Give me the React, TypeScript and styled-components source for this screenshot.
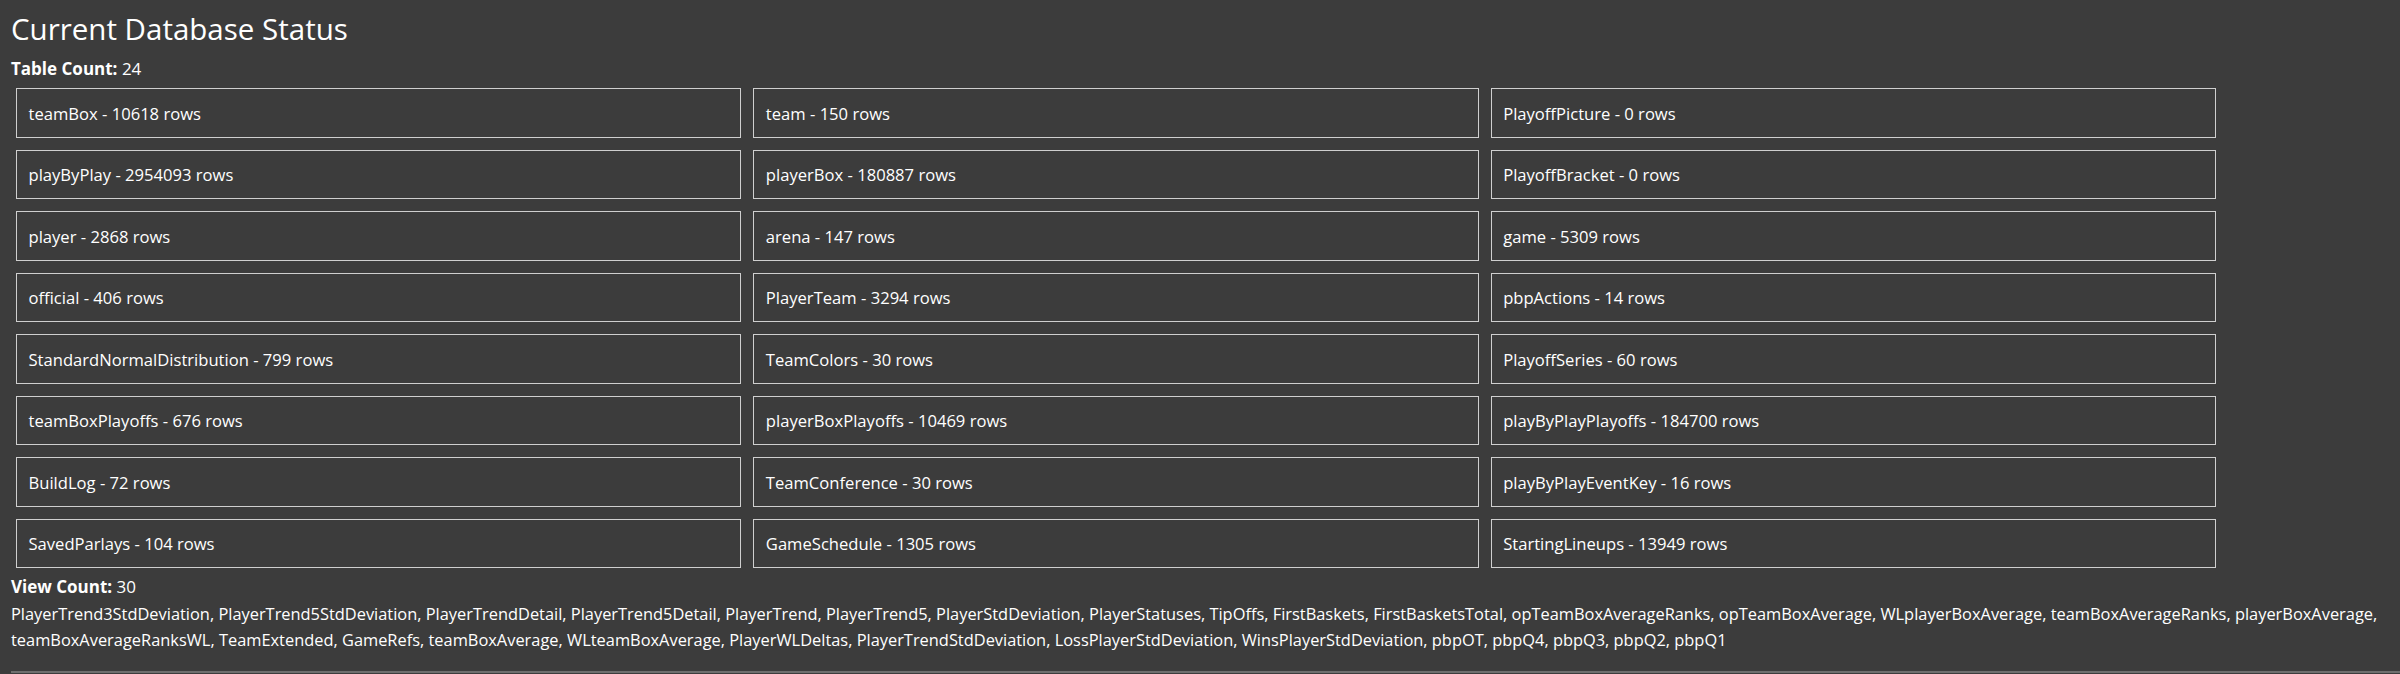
import React from "react";
import styled, { createGlobalStyle } from "styled-components";

const Global = createGlobalStyle`
  html, body {
    margin: 0;
    padding: 0;
    background: #3c3c3c;
  }
  body {
    color: #ffffff;
    font-family: "Open Sans", "Liberation Sans", sans-serif;
  }
`;

const Page = styled.div`
  padding: 8.6px 0 0 11px;
  background: #3c3c3c;
  min-height: 674px;
  box-sizing: border-box;
`;

const Title = styled.h2`
  margin: 0;
  font-size: 29.5px;
  font-weight: 400;
  line-height: 40px;
  color: #ffffff;
`;

const CountLine = styled.div<{ $gap: number }>`
  margin-top: ${(p) => p.$gap}px;
  font-size: 17px;
  line-height: 26px;
  color: #ffffff;
`;

const Label = styled.strong`
  font-weight: 700;
`;

const Grid = styled.div`
  display: grid;
  grid-template-columns: repeat(3, 1fr);
  gap: 12px;
  width: 2200px;
  margin: 5.8px 0 0 5px;
`;

const TableCard = styled.div`
  box-sizing: border-box;
  height: 49.5px;
  border: 1px solid #cfcfcf;
  padding: 0 11.5px;
  display: flex;
  align-items: center;
  font-size: 16.6px;
  color: #ffffff;
`;

const ViewList = styled.div`
  margin-top: 0.9px;
  font-size: 16.4px;
  line-height: 26px;
  padding-right: 8px;
  color: #ffffff;
`;

const Rule = styled.div`
  margin-top: 18px;
  height: 0;
  border-top: 2px solid #6e6e6e;
`;

const tables: [string, number][] = [
  ["teamBox", 10618],
  ["team", 150],
  ["PlayoffPicture", 0],
  ["playByPlay", 2954093],
  ["playerBox", 180887],
  ["PlayoffBracket", 0],
  ["player", 2868],
  ["arena", 147],
  ["game", 5309],
  ["official", 406],
  ["PlayerTeam", 3294],
  ["pbpActions", 14],
  ["StandardNormalDistribution", 799],
  ["TeamColors", 30],
  ["PlayoffSeries", 60],
  ["teamBoxPlayoffs", 676],
  ["playerBoxPlayoffs", 10469],
  ["playByPlayPlayoffs", 184700],
  ["BuildLog", 72],
  ["TeamConference", 30],
  ["playByPlayEventKey", 16],
  ["SavedParlays", 104],
  ["GameSchedule", 1305],
  ["StartingLineups", 13949],
];

const views = [
  "PlayerTrend3StdDeviation",
  "PlayerTrend5StdDeviation",
  "PlayerTrendDetail",
  "PlayerTrend5Detail",
  "PlayerTrend",
  "PlayerTrend5",
  "PlayerStdDeviation",
  "PlayerStatuses",
  "TipOffs",
  "FirstBaskets",
  "FirstBasketsTotal",
  "opTeamBoxAverageRanks",
  "opTeamBoxAverage",
  "WLplayerBoxAverage",
  "teamBoxAverageRanks",
  "playerBoxAverage",
  "teamBoxAverageRanksWL",
  "TeamExtended",
  "GameRefs",
  "teamBoxAverage",
  "WLteamBoxAverage",
  "PlayerWLDeltas",
  "PlayerTrendStdDeviation",
  "LossPlayerStdDeviation",
  "WinsPlayerStdDeviation",
  "pbpOT",
  "pbpQ4",
  "pbpQ3",
  "pbpQ2",
  "pbpQ1",
];

export default function App() {
  return (
    <>
      <Global />
      <Page>
        <Title>Current Database Status</Title>
        <CountLine $gap={7.9}>
          <Label>Table Count:</Label> {tables.length}
        </CountLine>
        <Grid>
          {tables.map(([name, rows]) => (
            <TableCard key={name}>
              {name} - {rows} rows
            </TableCard>
          ))}
        </Grid>
        <CountLine $gap={6.2}>
          <Label>View Count:</Label> {views.length}
        </CountLine>
        <ViewList>{views.join(", ")}</ViewList>
        <Rule />
      </Page>
    </>
  );
}
